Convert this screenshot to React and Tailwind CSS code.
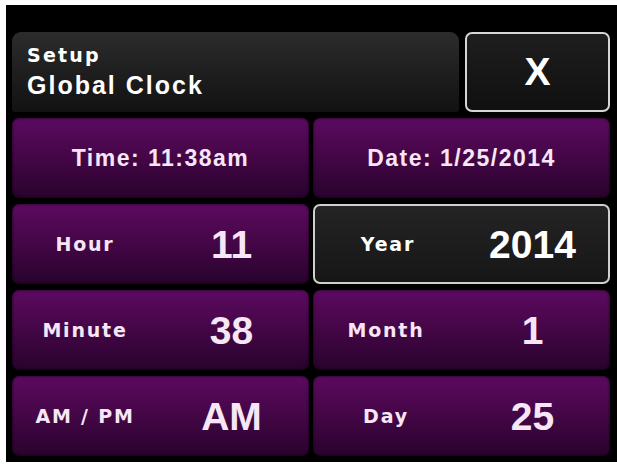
import React from 'react';

// clock setup screen: header + 2x4 grid of purple keys
const rows = [
    [{ label: 'Hour', value: '11' }, { label: 'Year', value: '2014', active: true }],
    [{ label: 'Minute', value: '38' }, { label: 'Month', value: '1' }],
    [{ label: 'AM / PM', value: 'AM' }, { label: 'Day', value: '25' }],
];

const purple = "rounded-[7px] bg-gradient-to-b from-[#5c0a60] via-[#440646] to-[#28032d] shadow-[inset_0_0_3px_rgba(0,0,0,0.8)]";

function FieldKey({ label, value, active }) {
    const box = active
        ? "rounded-[7px] bg-gradient-to-b from-[#242424] to-[#161616] border-2 border-[#cfcfcf] text-white"
        : `${purple} text-[#f6e6f6]`;
    return (
        <div className={`grid grid-cols-[146px_1fr] items-center pr-[4px] ${box}`}>
            <span className="text-center text-[19px] font-bold tracking-[1.8px] font-['DejaVu_Sans',sans-serif]">{label}</span>
            <span className="text-center text-[39px] leading-none font-bold font-['Liberation_Sans',Arial,sans-serif]">{value}</span>
        </div>
    );
}

export default function App() {
    return (
        <div className="w-[617px] h-[464px] bg-white pt-[5px] pl-[6px]">
            <div className="w-[611px] h-[457px] bg-black pt-[27px] pl-[6px] flex flex-col gap-[6px]">
                {/* header */}
                <div className="flex gap-[6px] h-[80px]">
                    <div className="w-[447px] rounded-t-[9px] rounded-b-[3px] bg-gradient-to-b from-[#2c2c2c] to-[#121212] pl-[15px] pt-[12px] text-white">
                        <div className="text-[19px] font-bold tracking-[2.2px] leading-[22px] font-['DejaVu_Sans',sans-serif]">Setup</div>
                        <div className="text-[25px] font-bold tracking-[2px] leading-[32px] mt-[3px] font-['Liberation_Sans',Arial,sans-serif]">Global Clock</div>
                    </div>
                    <div className="w-[145px] rounded-[7px] border-2 border-[#d6d6d6] bg-gradient-to-b from-[#1e1e1e] to-[#101010] flex items-center justify-center text-white text-[39px] font-bold font-['Liberation_Sans',Arial,sans-serif]">
                        X
                    </div>
                </div>

                {/* keys */}
                <div className="grid grid-cols-[297px_297px] auto-rows-[80px] gap-x-[4px] gap-y-[6px]">
                    <div className={`${purple} flex items-center justify-center text-[#f6e6f6] text-[23px] font-bold tracking-[1.5px] font-['Liberation_Sans',Arial,sans-serif]`}>
                        Time: 11:38am
                    </div>
                    <div className={`${purple} flex items-center justify-center text-[#f6e6f6] text-[23px] font-bold tracking-[1.5px] font-['Liberation_Sans',Arial,sans-serif]`}>
                        Date: 1/25/2014
                    </div>
                    {rows.map((pair, i) => (
                        <React.Fragment key={i}>
                            {pair.map(f => <FieldKey key={f.label} {...f} />)}
                        </React.Fragment>
                    ))}
                </div>
            </div>
        </div>
    );
}
